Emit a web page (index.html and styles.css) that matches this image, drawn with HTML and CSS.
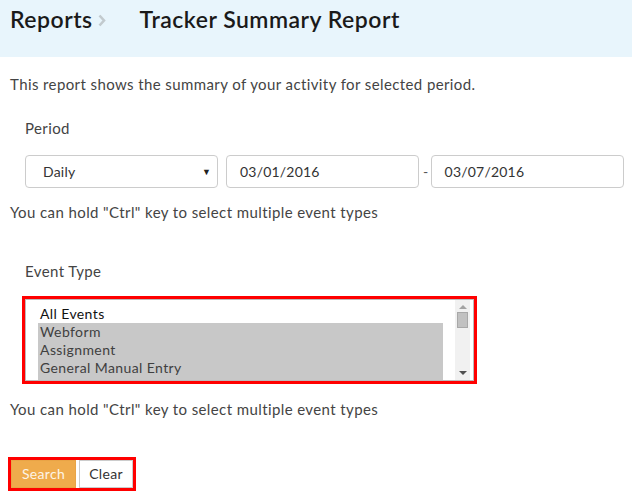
FILE: index.html
```html
<!DOCTYPE html>
<html>
<head>
<meta charset="utf-8">
<link rel="stylesheet" href="styles.css">
</head>
<body>
<header class="page-header">
  <h1 class="crumbs"><span class="crumb">Reports</span><svg class="chev" width="8" height="13" viewBox="0 0 8 13"><polyline points="1.5,1.5 6,6.5 1.5,11.5" fill="none" stroke="#c2cace" stroke-width="2.6"/></svg><span class="crumb">Tracker Summary Report</span></h1>
</header>
<main class="content">
  <p class="intro">This report shows the summary of your activity for selected period.</p>
  <div class="field">
    <div class="label">Period</div>
    <div class="period-row">
      <div class="select-box"><span>Daily</span><span class="caret">&#x25BC;</span></div>
      <div class="text-input">03/01/2016</div>
      <span class="dash">-</span>
      <div class="text-input">03/07/2016</div>
    </div>
  </div>
  <p class="hint hint-1">You can hold "Ctrl" key to select multiple event types</p>
  <div class="field field-event">
    <div class="label">Event Type</div>
    <div class="highlight list-wrap">
      <div class="listbox">
        <div class="options">
          <div class="opt">All Events</div>
          <div class="opt sel">Webform</div>
          <div class="opt sel">Assignment</div>
          <div class="opt sel">General Manual Entry</div>
          <div class="opt sel">Phone Call</div>
        </div>
        <div class="scrollbar">
          <div class="arrow up"></div>
          <div class="thumb"></div>
          <div class="track"></div>
          <div class="arrow down"></div>
        </div>
      </div>
    </div>
  </div>
  <p class="hint hint-2">You can hold "Ctrl" key to select multiple event types</p>
  <div class="highlight buttons">
    <button class="btn btn-search">Search</button>
    <button class="btn btn-clear">Clear</button>
  </div>
</main>
</body>
</html>
```

FILE: styles.css
```css
html, body {
  margin: 0;
  padding: 0;
  background: #ffffff;
}
body {
  font-family: "Lato", "Open Sans", sans-serif;
  color: #444444;
  width: 632px;
  height: 495px;
  overflow: hidden;
  letter-spacing: 0.4px;
}
.page-header {
  background: #e8f5fc;
  height: 57px;
  padding: 4px 0 0 10px;
  box-sizing: border-box;
}
.crumbs {
  margin: 0;
  font-size: 23px;
  font-weight: 600;
  color: #1a1a1a;
  display: flex;
  align-items: center;
  line-height: 30px;
  letter-spacing: 0.5px;
}
.chev {
  margin: 3px 34px 0 5px;
  display: block;
}
.content {
  padding: 0 6px 0 10px;
}
.intro {
  margin: 0;
  padding-top: 17px;
  font-size: 15px;
  line-height: 20px;
}
.field {
  padding-left: 15px;
}
.label {
  font-size: 15px;
  line-height: 20px;
  margin-top: 24px;
}
.period-row {
  display: flex;
  align-items: center;
  margin-top: 17px;
  height: 33px;
}
.select-box, .text-input {
  box-sizing: border-box;
  height: 33px;
  border: 1px solid #cccccc;
  border-radius: 4px;
  font-size: 14px;
  color: #333333;
  display: flex;
  align-items: center;
  letter-spacing: 0.2px;
  flex-shrink: 0;
}
.select-box {
  width: 193px;
  padding: 0 6px 0 17px;
  justify-content: space-between;
}
.caret {
  font-size: 9px;
  color: #222;
}
.text-input {
  width: 193px;
  padding-left: 13px;
  margin-left: 8px;
}
.dash {
  margin-left: 4px;
  margin-right: -6px;
  font-size: 14px;
  color: #555;
}
.hint {
  margin: 0;
  font-size: 15px;
  line-height: 20px;
}
.hint-1 {
  margin-top: 14px;
}
.field-event .label {
  margin-top: 39px;
}
.highlight {
  border: 3px solid #ff0000;
  box-sizing: border-box;
}
.list-wrap {
  margin-top: 15px;
  margin-left: -3px;
  width: 455px;
  height: 88px;
}
.listbox {
  border: 1px solid #bbbbbb;
  height: 100%;
  box-sizing: border-box;
  display: flex;
  background: #fff;
}
.options {
  flex: 1;
  padding: 5px 12px 0 12px;
  overflow: hidden;
  font-size: 14px;
  line-height: 18px;
  color: #111;
}
.opt {
  padding-left: 2px;
  height: 18px;
}
.opt.sel {
  background: #c8c8c8;
  color: #3f3f3f;
}
.scrollbar {
  width: 15px;
  background: #f1f1f1;
  display: flex;
  flex-direction: column;
  align-items: center;
  margin-right: 3px;
}
.arrow {
  width: 0;
  height: 0;
  border-left: 4px solid transparent;
  border-right: 4px solid transparent;
  margin: 5px 0 3px;
}
.arrow.up {
  border-bottom: 4px solid #a3a3a3;
}
.arrow.down {
  border-top: 4px solid #505050;
  margin: 3px 0 5px;
}
.thumb {
  width: 11px;
  height: 16px;
  background: #c1c1c1;
  border: 1px solid #a8a8a8;
  box-sizing: border-box;
}
.track {
  flex: 1;
}
.hint-2 {
  margin-top: 15px;
}
.buttons {
  margin-top: 38px;
  margin-left: -2px;
  width: 128px;
  height: 34px;
  display: flex;
  align-items: stretch;
  padding: 0;
}
.btn {
  font-family: inherit;
  font-size: 14px;
  border-radius: 0;
  margin: 0;
  cursor: pointer;
  padding: 0 0 2px;
  letter-spacing: 0.3px;
}
.btn-search {
  background: #efab4c;
  color: #fdf4e6;
  border: 1px solid #e9a446;
  width: 65px;
}
.btn-clear {
  background: #ffffff;
  color: #333333;
  border: 1px solid #cccccc;
  margin-left: 3px;
  width: 54px;
}
```
